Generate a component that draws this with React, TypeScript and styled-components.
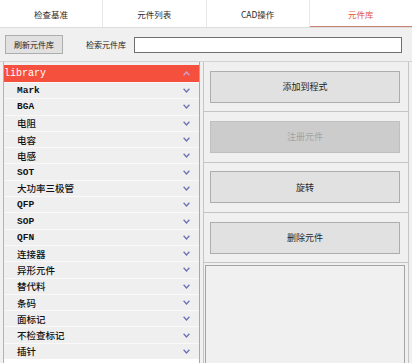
import React from "react";
import styled, { createGlobalStyle } from "styled-components";

const GlobalStyle = createGlobalStyle`
    html, body {
        margin: 0;
        padding: 0;
        background: #f0f0f0;
    }
    body {
        font-family: "Noto Sans CJK SC", "Liberation Sans", sans-serif;
    }
`;

const PageWrapper = styled.div`
    width: 412px;
    height: 363px;
    display: flex;
    flex-direction: column;
    background: #f0f0f0;
    overflow: hidden;
`;

const TabBar = styled.div`
    display: flex;
    height: 28px;
    background: #ffffff;
    border-bottom: 1px solid #dcdcdc;
    box-sizing: border-box;
`;

const Tab = styled.div<{ $active?: boolean }>`
    flex: 1;
    display: flex;
    align-items: center;
    justify-content: center;
    font-size: 8.5px;
    color: ${(p) => (p.$active ? "#e2553f" : "#2a2a2a")};
    border-right: 1px solid #e8e8e8;
    box-shadow: ${(p) => (p.$active ? "inset 0 -1px 0 #c98474" : "none")};
    &:last-child {
        border-right: none;
    }
`;

const SearchRow = styled.div`
    display: flex;
    align-items: center;
    height: 33px;
    padding: 0 10px 0 5px;
`;

const SmallButton = styled.div`
    width: 58px;
    height: 19px;
    box-sizing: border-box;
    display: flex;
    align-items: center;
    justify-content: center;
    background: #e1e1e1;
    border: 1px solid #adadad;
    font-size: 8px;
    color: #222;
`;

const SearchLabel = styled.span`
    margin-left: 23px;
    font-size: 8px;
    color: #222;
`;

const SearchInput = styled.input`
    flex: 1;
    margin-left: 8px;
    height: 16px;
    box-sizing: border-box;
    border: 1px solid #6f6f6f;
    background: #ffffff;
    outline: none;
    padding: 0 3px;
`;

const MainArea = styled.div`
    flex: 1;
    display: flex;
    gap: 3px;
    border-top: 1px solid #d2d2d2;
    padding: 0 3px 0 3px;
    min-height: 0;
`;

const LibraryPanel = styled.div`
    width: 197px;
    box-sizing: border-box;
    border-left: 1px solid #b4b4b4;
    border-right: 1px solid #a8a8a8;
    padding-top: 3px;
    display: flex;
    flex-direction: column;
    background: linear-gradient(#f0f0f0 0 3px, #ffffff 3px);
`;

const GroupHeader = styled.div`
    height: 17px;
    display: flex;
    align-items: center;
    justify-content: space-between;
    padding: 0 9px 0 0;
    background: #f5503d;
    color: #ffffff;
    font-family: "Liberation Mono", "Noto Sans CJK SC", monospace;
    font-size: 10px;
`;

const GroupRow = styled.div<{ $latin?: boolean }>`
    height: 16.3px;
    box-sizing: border-box;
    display: flex;
    align-items: center;
    justify-content: space-between;
    padding: 0 9px 0 13px;
    background: #efefef;
    border-top: 1px solid #f9f9f9;
    color: #111111;
    font-family: "Liberation Mono", "Noto Sans CJK SC", monospace;
    font-size: 9.5px;
    font-weight: ${(p) => (p.$latin ? 700 : 500)};
`;

const ActionPanel = styled.div`
    flex: 1;
    display: flex;
    flex-direction: column;
    border-left: 1px solid #c6c6c6;
    border-right: 1px solid #c6c6c6;
`;

const ActionSection = styled.div`
    height: 50.3px;
    box-sizing: border-box;
    display: flex;
    align-items: center;
    padding: 0 8px 0 6px;
    border-bottom: 1px solid #c4c4c4;
`;

const ActionButton = styled.div<{ $disabled?: boolean }>`
    flex: 1;
    height: 32px;
    box-sizing: border-box;
    display: flex;
    align-items: center;
    justify-content: center;
    font-size: 9px;
    background: ${(p) => (p.$disabled ? "#cccccc" : "#e1e1e1")};
    border: 1px solid ${(p) => (p.$disabled ? "#bfbfbf" : "#adadad")};
    color: ${(p) => (p.$disabled ? "#a3a3a3" : "#1e1e1e")};
`;

const PreviewBox = styled.div`
    flex: 1;
    margin: 2px 3px 0 1px;
    border: 1px solid #a4a4a4;
    border-bottom: none;
    background: #f0f0f0;
`;

const Chevron: React.FC<{ up?: boolean; color: string }> = ({ up, color }) => (
    <svg width="7" height="5" viewBox="0 0 7 5">
        <polyline
            points={up ? "0.6,4.2 3.5,1 6.4,4.2" : "0.6,0.8 3.5,4 6.4,0.8"}
            fill="none"
            stroke={color}
            strokeWidth="1.3"
        />
    </svg>
);

const tabs = ["检查基准", "元件列表", "CAD操作", "元件库"];

const groups = [
    "Mark", "BGA", "电阻", "电容", "电感", "SOT", "大功率三极管", "QFP", "SOP",
    "QFN", "连接器", "异形元件", "替代料", "条码", "面标记", "不检查标记", "插针",
];

const actions = [
    { label: "添加到程式" },
    { label: "注册元件", disabled: true },
    { label: "旋转" },
    { label: "删除元件" },
];

export default function App() {
    return (
        <PageWrapper>
            <GlobalStyle />

            <TabBar>
                {tabs.map((t, i) => (
                    <Tab key={t} $active={i === tabs.length - 1}>{t}</Tab>
                ))}
            </TabBar>

            <SearchRow>
                <SmallButton>刷新元件库</SmallButton>
                <SearchLabel>检索元件库</SearchLabel>
                <SearchInput />
            </SearchRow>

            <MainArea>
                <LibraryPanel>
                    <GroupHeader>
                        <span>library</span>
                        <Chevron up color="#c9a3d6" />
                    </GroupHeader>
                    {groups.map((g) => (
                        <GroupRow key={g} $latin={/^[A-Za-z]+$/.test(g)}>
                            <span>{g}</span>
                            <Chevron color="#6b72b4" />
                        </GroupRow>
                    ))}
                </LibraryPanel>

                <ActionPanel>
                    {actions.map((a) => (
                        <ActionSection key={a.label}>
                            <ActionButton $disabled={a.disabled}>{a.label}</ActionButton>
                        </ActionSection>
                    ))}
                    <PreviewBox />
                </ActionPanel>
            </MainArea>
        </PageWrapper>
    );
}
